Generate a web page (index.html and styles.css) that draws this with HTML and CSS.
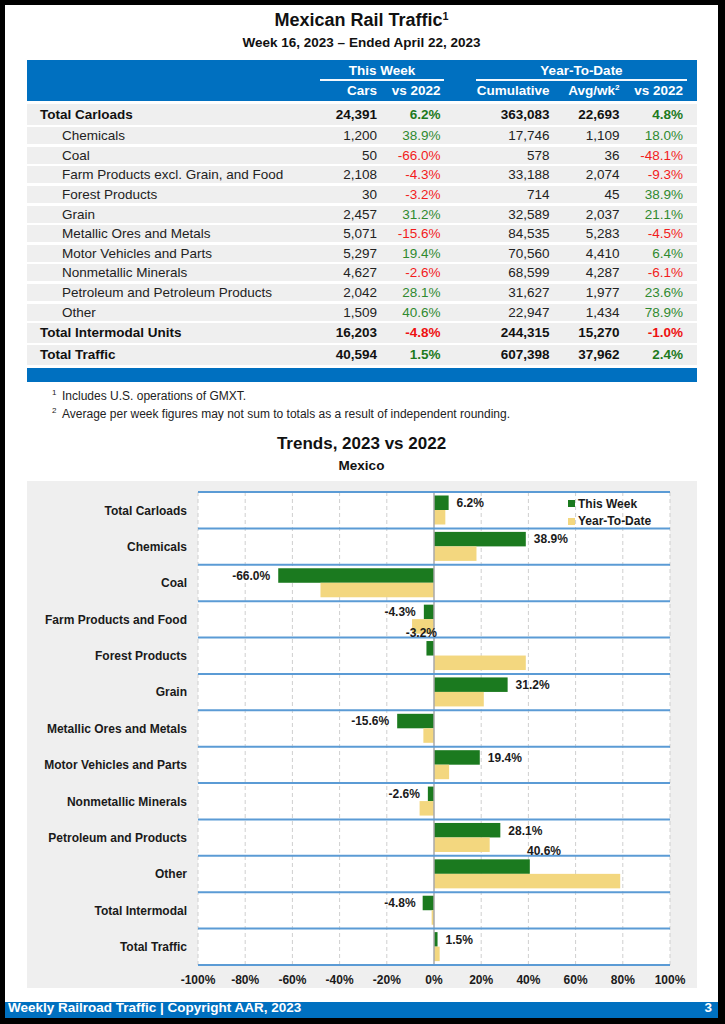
FILE: index.html
```html
<!DOCTYPE html>
<html>
<head>
<meta charset="utf-8">
<title>Mexican Rail Traffic</title>
<link rel="stylesheet" href="styles.css">
</head>
<body>
<div class="page">
  <h1 class="title">Mexican Rail Traffic<sup>1</sup></h1>
  <div class="subtitle">Week 16, 2023 – Ended April 22, 2023</div>

  <div class="tbl">
    <div class="thead">
      <div class="grp g1">This Week</div>
      <div class="grp g2">Year-To-Date</div>
      <div class="hc c2">Cars</div>
      <div class="hc c3">vs 2022</div>
      <div class="hc c4">Cumulative</div>
      <div class="hc c5">Avg/wk<sup>2</sup></div>
      <div class="hc c6">vs 2022</div>
    </div>
    <div class="row total"><div class="lbl">Total Carloads</div><div>24,391</div><div class="pos">6.2%</div><div>363,083</div><div>22,693</div><div class="pos">4.8%</div></div>
    <div class="row"><div class="lbl">Chemicals</div><div>1,200</div><div class="pos">38.9%</div><div>17,746</div><div>1,109</div><div class="pos">18.0%</div></div>
    <div class="row"><div class="lbl">Coal</div><div>50</div><div class="neg">-66.0%</div><div>578</div><div>36</div><div class="neg">-48.1%</div></div>
    <div class="row"><div class="lbl">Farm Products excl. Grain, and Food</div><div>2,108</div><div class="neg">-4.3%</div><div>33,188</div><div>2,074</div><div class="neg">-9.3%</div></div>
    <div class="row"><div class="lbl">Forest Products</div><div>30</div><div class="neg">-3.2%</div><div>714</div><div>45</div><div class="pos">38.9%</div></div>
    <div class="row"><div class="lbl">Grain</div><div>2,457</div><div class="pos">31.2%</div><div>32,589</div><div>2,037</div><div class="pos">21.1%</div></div>
    <div class="row"><div class="lbl">Metallic Ores and Metals</div><div>5,071</div><div class="neg">-15.6%</div><div>84,535</div><div>5,283</div><div class="neg">-4.5%</div></div>
    <div class="row"><div class="lbl">Motor Vehicles and Parts</div><div>5,297</div><div class="pos">19.4%</div><div>70,560</div><div>4,410</div><div class="pos">6.4%</div></div>
    <div class="row"><div class="lbl">Nonmetallic Minerals</div><div>4,627</div><div class="neg">-2.6%</div><div>68,599</div><div>4,287</div><div class="neg">-6.1%</div></div>
    <div class="row"><div class="lbl">Petroleum and Petroleum Products</div><div>2,042</div><div class="pos">28.1%</div><div>31,627</div><div>1,977</div><div class="pos">23.6%</div></div>
    <div class="row"><div class="lbl">Other</div><div>1,509</div><div class="pos">40.6%</div><div>22,947</div><div>1,434</div><div class="pos">78.9%</div></div>
    <div class="row total tall"><div class="lbl">Total Intermodal Units</div><div>16,203</div><div class="neg">-4.8%</div><div>244,315</div><div>15,270</div><div class="neg">-1.0%</div></div>
    <div class="row total tall"><div class="lbl">Total Traffic</div><div>40,594</div><div class="pos">1.5%</div><div>607,398</div><div>37,962</div><div class="pos">2.4%</div></div>
    <div class="tfoot"></div>
  </div>

  <div class="notes">
    <p><span class="fn">1</span>Includes U.S. operations of GMXT.</p>
    <p><span class="fn">2</span>Average per week figures may not sum to totals as a result of independent rounding.</p>
  </div>

  <h2 class="ctitle">Trends, 2023 vs 2022</h2>
  <div class="csub">Mexico</div>

  <div class="panel">
    <svg width="670" height="507" viewBox="0 0 670 507">
      <rect class="plotbg" x="171" y="11" width="472" height="473"/>
      <g class="grid">
        <line x1="171" y1="11" x2="171" y2="484"/>
        <line x1="218.2" y1="11" x2="218.2" y2="484"/>
        <line x1="265.4" y1="11" x2="265.4" y2="484"/>
        <line x1="312.6" y1="11" x2="312.6" y2="484"/>
        <line x1="359.8" y1="11" x2="359.8" y2="484"/>
        <line x1="454.2" y1="11" x2="454.2" y2="484"/>
        <line x1="501.4" y1="11" x2="501.4" y2="484"/>
        <line x1="548.6" y1="11" x2="548.6" y2="484"/>
        <line x1="595.8" y1="11" x2="595.8" y2="484"/>
        <line x1="643" y1="11" x2="643" y2="484"/>
      </g>
      <g class="bars-wk">
        <rect x="407" y="14.5" width="14.63" height="14.5"/>
        <rect x="407" y="50.885" width="91.8" height="14.5"/>
        <rect x="251.24" y="87.27" width="155.76" height="14.5"/>
        <rect x="396.85" y="123.655" width="10.15" height="14.5"/>
        <rect x="399.45" y="160.04" width="7.55" height="14.5"/>
        <rect x="407" y="196.425" width="73.63" height="14.5"/>
        <rect x="370.18" y="232.81" width="36.82" height="14.5"/>
        <rect x="407" y="269.195" width="45.78" height="14.5"/>
        <rect x="400.86" y="305.58" width="6.14" height="14.5"/>
        <rect x="407" y="341.965" width="66.32" height="14.5"/>
        <rect x="407" y="378.35" width="95.82" height="14.5"/>
        <rect x="395.67" y="414.735" width="11.33" height="14.5"/>
        <rect x="407" y="451.12" width="3.54" height="14.5"/>
      </g>
      <g class="bars-ytd">
        <rect x="407" y="29" width="11.33" height="14.5"/>
        <rect x="407" y="65.385" width="42.48" height="14.5"/>
        <rect x="293.48" y="101.77" width="113.52" height="14.5"/>
        <rect x="385.05" y="138.155" width="21.95" height="14.5"/>
        <rect x="407" y="174.54" width="91.8" height="14.5"/>
        <rect x="407" y="210.925" width="49.8" height="14.5"/>
        <rect x="396.38" y="247.31" width="10.62" height="14.5"/>
        <rect x="407" y="283.695" width="15.1" height="14.5"/>
        <rect x="392.6" y="320.08" width="14.4" height="14.5"/>
        <rect x="407" y="356.465" width="55.7" height="14.5"/>
        <rect x="407" y="392.85" width="186.2" height="14.5"/>
        <rect x="404.64" y="429.235" width="2.36" height="14.5"/>
        <rect x="407" y="465.62" width="5.66" height="14.5"/>
      </g>
      <line class="zero" x1="407" y1="11" x2="407" y2="484"/>
      <g class="cats">
        <line x1="171" y1="11" x2="643" y2="11"/>
        <line x1="171" y1="47.385" x2="643" y2="47.385"/>
        <line x1="171" y1="83.77" x2="643" y2="83.77"/>
        <line x1="171" y1="120.155" x2="643" y2="120.155"/>
        <line x1="171" y1="156.54" x2="643" y2="156.54"/>
        <line x1="171" y1="192.925" x2="643" y2="192.925"/>
        <line x1="171" y1="229.31" x2="643" y2="229.31"/>
        <line x1="171" y1="265.695" x2="643" y2="265.695"/>
        <line x1="171" y1="302.08" x2="643" y2="302.08"/>
        <line x1="171" y1="338.465" x2="643" y2="338.465"/>
        <line x1="171" y1="374.85" x2="643" y2="374.85"/>
        <line x1="171" y1="411.235" x2="643" y2="411.235"/>
        <line x1="171" y1="447.62" x2="643" y2="447.62"/>
        <line x1="171" y1="484" x2="643" y2="484"/>
      </g>
      <g class="ctext end">
        <text x="160" y="33.5">Total Carloads</text>
        <text x="160" y="69.885">Chemicals</text>
        <text x="160" y="106.27">Coal</text>
        <text x="160" y="142.655">Farm Products and Food</text>
        <text x="160" y="179.04">Forest Products</text>
        <text x="160" y="215.425">Grain</text>
        <text x="160" y="251.81">Metallic Ores and Metals</text>
        <text x="160" y="288.195">Motor Vehicles and Parts</text>
        <text x="160" y="324.58">Nonmetallic Minerals</text>
        <text x="160" y="360.965">Petroleum and Products</text>
        <text x="160" y="397.35">Other</text>
        <text x="160" y="433.735">Total Intermodal</text>
        <text x="160" y="470.12">Total Traffic</text>
      </g>
      <g class="ctext">
        <text x="429.6" y="26.05">6.2%</text>
        <text x="506.8" y="62.4">38.9%</text>
        <text class="end" x="243.2" y="98.8">-66.0%</text>
        <text class="end" x="388.8" y="135.2">-4.3%</text>
        <text class="end" x="410" y="156.3">-3.2%</text>
        <text x="488.6" y="208">31.2%</text>
        <text class="end" x="362.2" y="244.4">-15.6%</text>
        <text x="460.8" y="280.7">19.4%</text>
        <text class="end" x="392.9" y="317.1">-2.6%</text>
        <text x="481.3" y="353.5">28.1%</text>
        <text x="500" y="374.3">40.6%</text>
        <text class="end" x="388.7" y="426.3">-4.8%</text>
        <text x="418.5" y="462.7">1.5%</text>
      </g>
      <g class="legend">
        <rect class="lg-wk" x="541" y="19" width="7" height="7"/>
        <text class="ctext" x="551" y="26.8">This Week</text>
        <rect class="lg-ytd" x="541" y="37" width="7" height="7"/>
        <text class="ctext" x="551" y="44.3">Year-To-Date</text>
      </g>
      <g class="ctext mid">
        <text x="171" y="502.8">-100%</text>
        <text x="218.2" y="502.8">-80%</text>
        <text x="265.4" y="502.8">-60%</text>
        <text x="312.6" y="502.8">-40%</text>
        <text x="359.8" y="502.8">-20%</text>
        <text x="407" y="502.8">0%</text>
        <text x="454.2" y="502.8">20%</text>
        <text x="501.4" y="502.8">40%</text>
        <text x="548.6" y="502.8">60%</text>
        <text x="595.8" y="502.8">80%</text>
        <text x="643" y="502.8">100%</text>
      </g>
    </svg>
  </div>

  <footer class="footer"><span>Weekly Railroad Traffic | Copyright AAR, 2023</span><span>3</span></footer>
</div>
</body>
</html>
```

FILE: styles.css
```css
* {
  box-sizing: border-box;
  margin: 0;
  padding: 0;
}

html, body {
  background: #000;
}

body {
  padding: 5px 7px 6px 5px;
  font-family: "Liberation Sans", Arial, sans-serif;
  color: #222;
}

.page {
  width: 713px;
  height: 1013px;
  background: #fff;
  display: flex;
  flex-direction: column;
  padding-top: 4px;
}

sup {
  font-size: 0.6em;
  line-height: 0;
  vertical-align: 0.6em;
}

.title {
  font-size: 18px;
  line-height: 22px;
  font-weight: bold;
  text-align: center;
  color: #111;
}

.subtitle {
  margin-top: 3px;
  font-size: 13.5px;
  line-height: 18px;
  font-weight: bold;
  text-align: center;
  color: #111;
}

/* ---------- table ---------- */
.tbl {
  margin: 8px 21px 0 22px;
  width: 670px;
  display: flex;
  flex-direction: column;
  gap: 2.6px;
  font-size: 13.5px;
}

.thead {
  background: #0070c0;
  color: #fff;
  font-weight: bold;
  display: grid;
  grid-template-columns: 290px 60px 63.5px 109px 70px 63.5px;
  grid-template-rows: 21px 20px;
  height: 41px;
}

.grp {
  grid-row: 1;
  padding-top: 2px;
  line-height: 17px;
  border-bottom: 2px solid #f4f8fc;
  text-align: center;
}

.g1 {
  grid-column: 2 / 4;
  margin: 0 -3.5px 0 3px;
}

.g2 {
  grid-column: 4 / 7;
  margin: 0 -4px 0 35.5px;
}

.hc {
  grid-row: 2;
  line-height: 20px;
  text-align: right;
  white-space: nowrap;
}

.c2 { grid-column: 2; }
.c3 { grid-column: 3; }
.c4 { grid-column: 4; }
.c5 { grid-column: 5; }
.c6 { grid-column: 6; }

.row {
  display: grid;
  grid-template-columns: 290px 60px 63.5px 109px 70px 63.5px;
  background: #efefef;
  height: 17px;
  line-height: 17px;
}

.row > div {
  text-align: right;
  white-space: nowrap;
}

.row > .lbl {
  text-align: left;
  padding-left: 35px;
}

.row.total {
  font-weight: bold;
  height: 21px;
  line-height: 21px;
  color: #111;
}

.row.total .lbl {
  padding-left: 13px;
}

.row.tall {
  height: 19.6px;
  line-height: 19.6px;
}

.pos { color: #2f8a2f; }
.neg { color: #f21c1c; }
.row.total .pos { color: #1d7a1d; }
.row.total .neg { color: #ee1111; }

.tfoot {
  background: #0070c0;
  height: 14.7px;
}

/* ---------- notes ---------- */
.notes {
  margin-top: 4.7px;
  padding-left: 47px;
  font-size: 12px;
  line-height: 18px;
  color: #222;
}

.fn {
  display: inline-block;
  width: 10px;
  font-size: 8px;
  line-height: 8px;
  vertical-align: 5px;
}

/* ---------- chart ---------- */
.ctitle {
  margin-top: 10px;
  font-size: 17px;
  line-height: 22px;
  font-weight: bold;
  text-align: center;
  color: #111;
}

.csub {
  margin-top: 2px;
  font-size: 13.5px;
  line-height: 18px;
  font-weight: bold;
  text-align: center;
  color: #111;
}

.panel {
  margin: 6px 21px 0 22px;
  width: 670px;
  height: 507px;
  background: #efefef;
}

.panel svg {
  display: block;
}

.plotbg { fill: #fff; }

.grid line {
  stroke: #cfcfcf;
  stroke-width: 1;
  stroke-dasharray: 4 3;
}

.zero {
  stroke: #a8a8a8;
  stroke-width: 1.5;
}

.cats line {
  stroke: #5b9bd5;
  stroke-width: 2;
}

.bars-wk rect, .lg-wk { fill: #1b7a1f; }
.bars-ytd rect, .lg-ytd { fill: #f3d77f; }

.ctext, .ctext text {
  font-family: "Liberation Sans", Arial, sans-serif;
  font-weight: bold;
  font-size: 12px;
  fill: #1a1a1a;
}

.end, .end text { text-anchor: end; }
.mid text { text-anchor: middle; }

/* ---------- footer ---------- */
.footer {
  margin-top: auto;
  height: 16px;
  background: #0070c0;
  color: #fff;
  font-weight: bold;
  font-size: 13.5px;
  line-height: 11.4px;
  display: flex;
  justify-content: space-between;
  padding: 0 6px 0 3px;
}
```
